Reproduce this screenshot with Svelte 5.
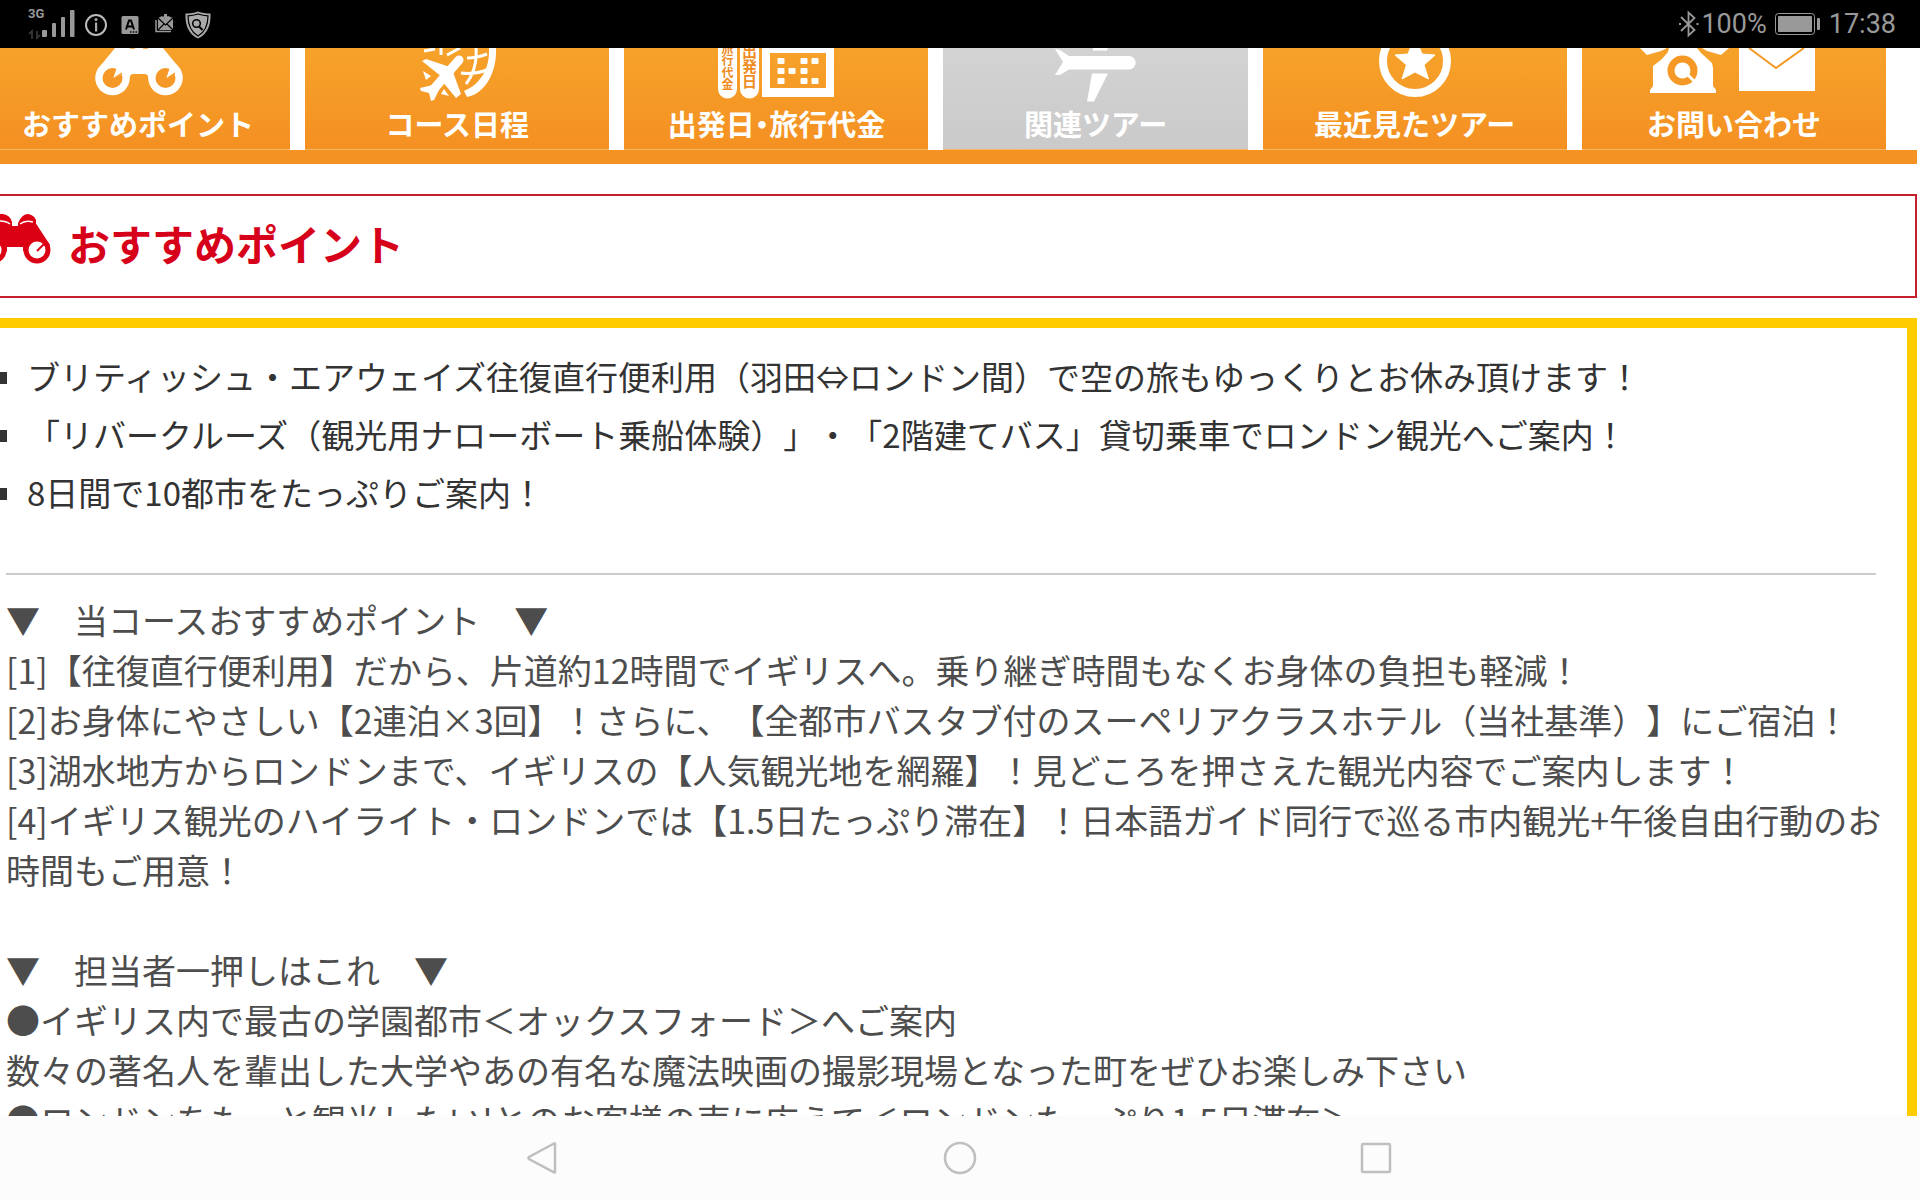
<script>

let tabs=[
    { id: 'point', label: 'おすすめポイント' },
    { id: 'course', label: 'コース日程' },
    { id: 'price', label: '出発日・旅行代金' },
    { id: 'related', label: '関連ツアー', disabled: true },
    { id: 'recent', label: '最近見たツアー' },
    { id: 'contact', label: 'お問い合わせ' }
]

let points=[
    'ブリティッシュ・エアウェイズ往復直行便利用（羽田⇔ロンドン間）で空の旅もゆっくりとお休み頂けます！',
    '「リバークルーズ（観光用ナローボート乗船体験）」・「2階建てバス」貸切乗車でロンドン観光へご案内！',
    '8日間で10都市をたっぷりご案内！'
]

let recommend=[
    '▼　当コースおすすめポイント　▼',
    '[1]【往復直行便利用】だから、片道約12時間でイギリスへ。乗り継ぎ時間もなくお身体の負担も軽減！',
    '[2]お身体にやさしい【2連泊×3回】！さらに、【全都市バスタブ付のスーペリアクラスホテル（当社基準）】にご宿泊！',
    '[3]湖水地方からロンドンまで、イギリスの【人気観光地を網羅】！見どころを押さえた観光内容でご案内します！',
    '[4]イギリス観光のハイライト・ロンドンでは【1.5日たっぷり滞在】！日本語ガイド同行で巡る市内観光+午後自由行動のお時間もご用意！'
]

let staffPick=[
    '▼　担当者一押しはこれ　▼',
    '●イギリス内で最古の学園都市＜オックスフォード＞へご案内',
    '数々の著名人を輩出した大学やあの有名な魔法映画の撮影現場となった町をぜひお楽しみ下さい',
    '●ロンドンをもっと観光したい!とのお客様の声に応えて＜ロンドンたっぷり1.5日滞在＞'
]

// calendar dots [x, y]
let dots=[[65,13],[88,13],[99,13],[65,23],[76,23],[88,23],[65,33],[88,33],[99,33]]

</script>


<div class="screen">

    <header class="status">
        <div class="status-group">
            <svg width="52" height="48" viewBox="28 0 52 48" fill="#999">
                <text x="28" y="18" font-size="13" font-weight="700" font-family="Roboto, sans-serif">3G</text>
                <path d="M29 34l3-3v8M37 31v7l3-3" fill="none" stroke="#3c3c3c" stroke-width="1.6"/>
                <rect x="42" y="30" width="5" height="7" rx="1"/>
                <rect x="52" y="23" width="4" height="14" rx="1"/>
                <rect x="61" y="17" width="4" height="20" rx="1"/>
                <rect x="70" y="10" width="4.500" height="27" rx="1"/>
            </svg>
            <svg width="32" height="48" viewBox="80 0 32 48" fill="#aaa">
                <circle cx="96" cy="25" r="10" fill="none" stroke="#bbb" stroke-width="2"/>
                <circle cx="96" cy="19.500" r="1.500"/>
                <rect x="95" y="22.500" width="2.200" height="9"/>
            </svg>
            <svg width="36" height="48" viewBox="112 0 36 48">
                <rect x="121.500" y="16" width="17" height="18" rx="1.500" fill="#999"/>
                <path d="M126 29.500l3-9h2l3 9M127.500 26.500h5" fill="none" stroke="#000" stroke-width="2"/>
                <path d="M130 32h1.500M132.800 32h1.500M135.500 32h1.500" stroke="#000" stroke-width="1.500"/>
            </svg>
            <svg width="32" height="48" viewBox="148 0 32 48">
                <path d="M156 20v11.500h15" fill="none" stroke="#999" stroke-width="1.500"/>
                <path d="M158 18l4-2 3 3.500 3-3.500 5 2v12h-15z" fill="#999"/>
                <path d="M158 18l7.500 7 7.500-7M158 30l6-6M173 30l-6-6" fill="none" stroke="#000" stroke-width="1.200"/>
                <path d="M164 14h3v2.500h2l-3.500 3.500-3.500-3.500h2z" fill="#999"/>
            </svg>
            <svg width="36" height="48" viewBox="180 0 36 48">
                <path d="M198 11.500c4 1.500 8 2 12.500 2 .5 12-3 20.500-12.500 25-9.500-4.500-13-13-12.500-25 4.500 0 8.500-.5 12.500-2z" fill="#aaa"/>
                <path d="M198 14c3.500 1.200 6.500 1.700 10 1.800 0 9.700-2.500 16-10 20.200-7.500-4.200-10-10.500-10-20.200 3.500-.1 6.500-.6 10-1.800z" fill="none" stroke="#000" stroke-width="1.200"/>
                <circle cx="196.500" cy="23.500" r="3.800" fill="none" stroke="#000" stroke-width="1.500"/>
                <path d="M199 26.500l3.500 3.500" stroke="#000" stroke-width="2"/>
            </svg>
        </div>
        <div class="status-group right">
            <svg width="24" height="48" viewBox="1678 0 24 48" fill="none" stroke="#999" stroke-width="1.800">
                <path d="M1682 17l13.500 13-6 5.500v-23l6 5.500-13.500 13"/>
                <path d="M1680 24h2M1697.500 24h2" stroke-width="2"/>
            </svg>
            <span>100%</span>
            <svg class="battery" width="46" height="48" viewBox="1776 0 46 48">
                <rect x="1776.500" y="13.500" width="39" height="21" rx="3" fill="none" stroke="#999"/>
                <rect x="1779" y="16" width="34" height="16" rx="1" fill="#999"/>
                <rect x="1818" y="18" width="3" height="12" rx="1" fill="#999"/>
            </svg>
            <span>17:38</span>
        </div>
    </header>

    <main>
        <nav class="tabs">
            {#each tabs as tab}
            <a href="#{tab.id}" class="tab" class:disabled={tab.disabled}>
                <svg width="200" height="54" viewBox="-40 0 200 54" fill="#fff">
                    {#if tab.id === 'point'}
                    <path d="M37 0H85L103 22 88 36 71 34Q71 26 67 26H55Q51 26 51 34L34 36 19 22z"/>
                    <circle cx="34.500" cy="30" r="17.300"/>
                    <circle cx="87.500" cy="30" r="17.300"/>
                    <circle cx="34.500" cy="30" r="10" fill="#f59825"/>
                    <circle cx="87.500" cy="30" r="10" fill="#f59825"/>
                    <path d="M35 31L39 19 47 24zM88 31L92 19 100 24z"/>
                    <path d="M35 31l9-6M88 31l9-6" stroke="#f59825" stroke-width="1.200"/>
                    <path d="M52 0h5M65 0h5" stroke="#f59825" stroke-width="1.500"/>
                    {:else if tab.id === 'course'}
                    <path d="M99 0C100 22 90 45 70 49L67 43C84 36 93 20 92 0z"/>
                    <path d="M79 0C80 14 77 26 69 36M64 25Q78 27 92 21M70 10Q80 10 90 6M27 3L38 1M44 0V7M50 7L63 0" fill="none" stroke="#fff" stroke-width="3"/>
                    <path d="M62 12L36 42" stroke="#fff" stroke-width="9" stroke-linecap="round"/>
                    <path d="M25 13L29 11 53 19 45 29zM56 24L64 46 59 50 45 33zM36 37L23 40 24 43 32 45 34 53 37 52 42 42z"/>
                    <path d="M26 23L34 28 29 32zM47 41L52 48 44 46z"/>
                    {:else if tab.id === 'price'}
                    <path d="M2 0H21V41a9.500 9.500 0 0 1-19 0zM24 0H43V41a9.500 9.500 0 0 1-19 0z"/>
                    <path d="M46 0H118V49H46zM54 5V40H110V5z" fill-rule="evenodd"/>
                    {#each dots as [x, y]}
                    <rect x={x - 3.5} y={y - 3} width="7" height="6" rx="1"/>
                    {/each}
                    <g class="pill">
                        <text x="11.500" y="-6">旅行代金</text>
                        <text x="33.500" y="-4">出発日</text>
                    </g>
                    {:else if tab.id === 'related'}
                    <path d="M19 1L24 2 33 8H93a6.700 6.700 0 0 1 0 13.400H33L24 27H19L27 14zM57 0H72L71 2.500H57zM56 25.500H72L58 53.500H51z"/>
                    {:else if tab.id === 'recent'}
                    <circle cx="60" cy="13" r="32" fill="none" stroke="#fff" stroke-width="8"/>
                    <path d="M60-12L67 6 80 7 69 17 73.500 31 60 24 47 31 51.500 17 40 7 53 6z" stroke="#fff" stroke-width="1" stroke-linejoin="round"/>
                    {:else}
                    <path d="M-34 0H-7L-13 3-27 7zM55 0H28L33 3 47 7z"/>
                    <path d="M-5 0H23L27 5 38 15 39 20V38L42 42V45H-24V42L-21 38V18L-12 11-6 4z"/>
                    <circle cx="8.500" cy="22.500" r="11.500" fill="none" stroke="#f59825" stroke-width="7"/>
                    <path d="M14 27l7 7" stroke="#fff" stroke-width="3"/>
                    <path d="M65 0H141V43H65z"/>
                    <path d="M75 0L102 20 130 0" fill="none" stroke="#f59825" stroke-width="2"/>
                    {/if}
                </svg>
                <span>{tab.label}</span>
            </a>
            {/each}
        </nav>

        <h2 class="title" id="point">
            <svg width="52" height="64" viewBox="0 0 52 64" fill="#dc0014">
                <path d="M0 9L8 12H22L35 8 50 31 37 40 23 37V33H7V37L0 44z"/>
                <path d="M18 9Q22 0 28 0 34 1 36 6L36 12H18zM12 12V8Q10 1 3 0H0V12z"/>
                <path d="M20 10Q25 6 33 8M10 10Q6 7 0 7" fill="none" stroke="#fff" stroke-width="1.500"/>
                <circle cx="37" cy="36" r="13.500"/>
                <circle cx="-7" cy="36" r="13.500"/>
                <circle cx="37" cy="36" r="8.500" fill="#fff"/>
                <circle cx="-7" cy="36" r="8.500" fill="#fff"/>
                <path d="M37 37l8-8" stroke="#dc0014" stroke-width="2"/>
            </svg>
            <span>おすすめポイント</span>
        </h2>

        <section class="box">
            <ul>
                {#each points as point}
                <li>{point}</li>
                {/each}
            </ul>
            <hr>
            <div class="text">
                {#each recommend as line}
                <p>{line}</p>
                {/each}
            </div>
            <div class="text">
                {#each staffPick as line}
                <p>{line}</p>
                {/each}
            </div>
        </section>
    </main>

    <footer class="keys">
        <button aria-label="戻る">
            <svg width="36" height="36" viewBox="0 0 36 36"><path d="M29 4v28q0 1-1 .3L3 19q-1-1 0-2L28 3.500q1-.5 1 .5z"/></svg>
        </button>
        <button aria-label="ホーム">
            <svg width="36" height="36" viewBox="0 0 36 36"><circle cx="18" cy="18" r="15"/></svg>
        </button>
        <button aria-label="履歴">
            <svg width="36" height="36" viewBox="0 0 36 36"><rect x="4" y="4" width="28" height="28" rx="1"/></svg>
        </button>
    </footer>

</div>


<style>

:global(body) {
    margin: 0;
    background: #fff;
}

.screen {
    display: flex;
    flex-direction: column;
    height: 100vh;
    overflow: hidden;
    font-family: "Noto Sans CJK JP", sans-serif;
    text-spacing-trim: space-all;
}

.status {
    display: flex;
    flex: none;
    justify-content: space-between;
    padding: 0 24px 0 28px;
    background: #000;
    color: #999;
    font-family: Roboto, sans-serif;
    font-size: 27px;
    line-height: 48px;
}

.status-group {
    display: flex;
}

.battery {
    margin: 0 8px;
}

main {
    flex: 1;
    min-height: 0;
    overflow: hidden;
    padding-right: 3px;
}

.tabs {
    display: grid;
    grid-template-columns: repeat(6, 1fr);
    gap: 15px;
    margin-left: -14px;
    padding-right: 31px;
    border-bottom: 14px solid #f49222;
}

.tab {
    display: flex;
    flex-direction: column;
    align-items: center;
    gap: 4px;
    padding-bottom: 8px;
    border-bottom: 1px solid #f8b568;
    background: linear-gradient(#f6a22a, #f49022);
    color: #fff;
    font-size: 29px;
    font-weight: 700;
    line-height: 35px;
    text-decoration: none;
    white-space: nowrap;
    font-feature-settings: "halt";
}

.tab.disabled {
    background: linear-gradient(#d3d3d3, #cacaca);
}

.pill {
    fill: #f08c1e;
    font-size: 12px;
    font-weight: 700;
    writing-mode: vertical-rl;
}

.pill text:last-child {
    font-size: 15px;
}

.title {
    display: flex;
    align-items: center;
    gap: 16px;
    height: 100px;
    margin: 30px 0 20px -2px;
    border: 2px solid #c4202f;
    color: #d7001a;
    font-size: 42px;
    font-weight: 700;
    line-height: 60px;
}

.title span {
    padding-bottom: 6px;
}

.box {
    border: solid #ffcc00;
    border-width: 10px 10px 0 0;
    padding: 19px 16px 0 6px;
}

ul {
    margin: 0 0 52px -11px;
    padding: 0;
    list-style: none;
}

li {
    display: flex;
    align-items: center;
    gap: 20px;
    color: #333;
    font-size: 33px;
    line-height: 58px;
}

li::before {
    content: "";
    width: 12px;
    height: 12px;
    margin-top: 4px;
    background: #333;
}

hr {
    margin: 0 15px 20px 0;
    border: 0;
    border-top: 2px solid #ccc;
}

.text {
    margin-bottom: 50px;
    color: #4d4d4d;
    font-size: 34px;
    line-height: 50px;
}

p {
    margin: 0;
}

.keys {
    display: flex;
    flex: none;
    align-items: center;
    justify-content: center;
    gap: 380px;
    height: 84px;
    background: #fcfcfc;
}

button {
    display: flex;
    padding: 0;
    border: 0;
    background: none;
}

button svg {
    fill: none;
    stroke: #bfbfbf;
    stroke-width: 2.5px;
}

</style>
